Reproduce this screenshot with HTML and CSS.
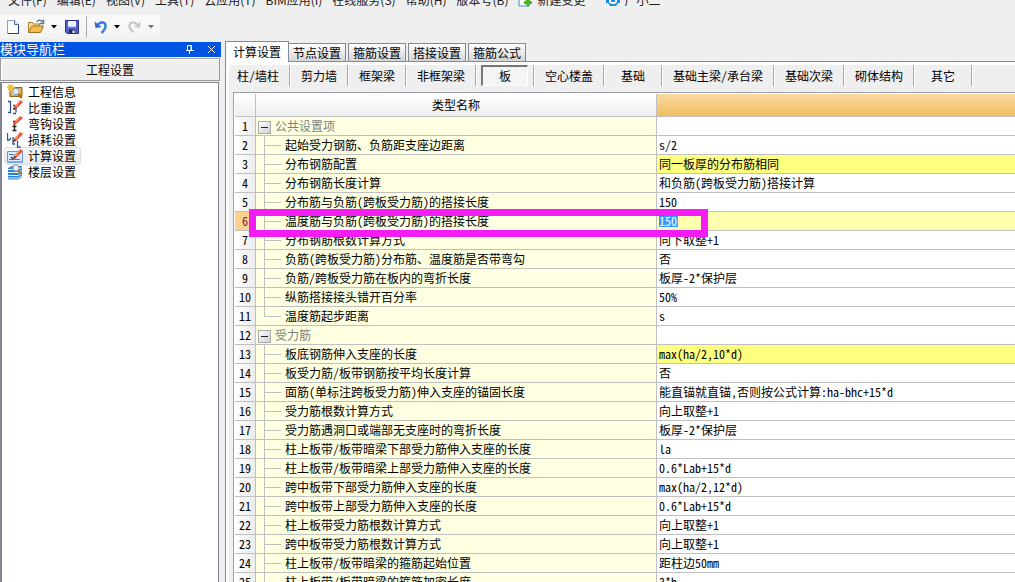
FILE: index.html
```html
<!DOCTYPE html>
<html lang="zh-CN">
<head>
<meta charset="utf-8">
<title>工程设置</title>
<link rel="stylesheet" href="styles.css">
</head>
<body>
<nav class="menubar">
  <a href="#">文件(F)</a><a href="#">编辑(E)</a><a href="#">视图(V)</a><a href="#">工具(T)</a><a href="#">云应用(T)</a><a href="#">BIM应用(I)</a><a href="#">在线服务(S)</a><a href="#">帮助(H)</a><a href="#">版本号(B)</a>
  <a href="#" class="with-icon"><svg width="14" height="16" viewBox="0 0 14 16"><path d="M1 1h10v13H1z" fill="#fff" stroke="#3c8ad0"/><path d="M8 5h4v4h2l-4 6-4-6h2z" fill="#43b51f"/><path d="M6 10h8v2H6z" fill="#43b51f"/></svg>新建变更</a>
  <a href="#" class="with-icon user"><svg width="14" height="16" viewBox="0 0 14 16"><path d="M1 3h12v3h1v5h-2l-2 3H4l-2-3H0V6h1z" fill="#1c8fe0"/><ellipse cx="7" cy="9" rx="4" ry="3" fill="#fff"/><path d="M5 8h4v2H5z" fill="#1c8fe0"/></svg>广小二</a>
</nav>
<div class="toolbar">
  <button class="tool new" aria-label="新建"><svg width="12" height="14" viewBox="0 0 12 14"><path d="M.5.5h7l4 4v9H.5z" fill="#fff" stroke="#8c9dba"/><path d="M7.500.5v4h4" fill="#dbe6f5" stroke="#556b90"/><path d="M11.500 5v8.500H1" fill="none" stroke="#25406e"/></svg></button>
  <button class="tool open" aria-label="打开"><svg width="17" height="15" viewBox="0 0 17 15"><path d="M.5 13.500v-10h4l1 1.500h6v3" fill="#f7d98a" stroke="#a8803a"/><path d="M.5 13.500 4 7h11.500l-3 6.500z" fill="#f6bd4e" stroke="#9b742f"/><path d="M9 3c1-2.500 4-2.500 5.500 0M15.500.5v4h-4" fill="none" stroke="#587595" stroke-width="1.400"/></svg></button>
  <button class="tool drop" aria-label="最近文件"><svg width="6" height="4" viewBox="0 0 6 4"><path d="M0 0h6L3 3.500z" fill="#000"/></svg></button>
  <button class="tool save" aria-label="保存"><svg width="14" height="14" viewBox="0 0 14 14"><path d="M.5.5h13v13H2l-1.500-1.500z" fill="#5361c9" stroke="#28318d"/><path d="M3 1h8v6H3z" fill="#edf1ff"/><path d="M3 7h8" stroke="#9aa5e8"/><path d="M4 9.500h6V13H4z" fill="#232b59"/><path d="M7.500 10.500h2V13h-2z" fill="#fff"/></svg></button>
  <span class="tool-line"></span>
  <button class="tool undo" aria-label="撤销"><svg width="14" height="14" viewBox="0 0 14 14"><path d="M4 4.500C7 1 12 2 11.500 6.500 11.300 9.500 9 11.500 7.500 13" fill="none" stroke="#3f7fdc" stroke-width="2.600"/><path d="M.5 1.500 1.500 8l6-1z" fill="#2e65c8"/></svg></button>
  <button class="tool drop" aria-label="撤销列表"><svg width="6" height="4" viewBox="0 0 6 4"><path d="M0 0h6L3 3.500z" fill="#000"/></svg></button>
  <button class="tool redo" aria-label="重做"><svg width="14" height="14" viewBox="0 0 14 14"><path d="M9 4.500C6 1 1 2 1.500 6.500 1.700 9 3.500 10.500 5.500 12" fill="none" stroke="#c6c8ca" stroke-width="2.200"/><path d="M12.500 1.500 12 8 6 7z" fill="#c6c8ca"/></svg></button>
  <button class="tool drop" aria-label="重做列表"><svg width="6" height="4" viewBox="0 0 6 4"><path d="M0 0h6L3 3.500z" fill="#777"/></svg></button>
</div>
<div class="workspace">
  <aside class="navigator">
    <header class="nav-title"><span>模块导航栏</span>
      <button class="pin" aria-label="固定"><svg width="8" height="9" viewBox="0 0 8 9"><path d="M1.500 5V.5h4V5M5 .5V5M0 5.500h8M3.500 6v3" fill="none" stroke="#fff"/></svg></button>
      <button class="close" aria-label="关闭"><svg width="9" height="9" viewBox="0 0 9 9"><path d="m1 1 7 7M8 1 1 8" stroke="#fff" fill="none"/></svg></button>
    </header>
    <button class="nav-group">工程设置</button>
    <div class="nav-list">
      <button class="nav-item"><svg width="16" height="16" viewBox="0 0 16 16"><path d="M3 3.500h12v9H3z" fill="#e2a83b" stroke="#8c6420"/><path d="M5 5h8v6H5z" fill="#f8e5ae"/><path d="M3.500 0v8M0 3.500h8M1 1l5 5M6 1 1 6" stroke="#f2c22e" stroke-width="1.300"/><circle cx="9" cy="7.500" r="3.200" fill="#e3f0fc" stroke="#8296b4"/><path d="m11.500 10 3 4" stroke="#b06b18" stroke-width="2.400"/></svg><span>工程信息</span></button>
      <button class="nav-item"><svg width="16" height="16" viewBox="0 0 16 16"><path d="M1 1.500h2.500v11H1M6 5.500h3v7M9 13.500H6" fill="none" stroke="#2f538e" stroke-width="1.300"/><path d="m6 10 1-3 6-7 3 2-7 7z" fill="#e8492a"/><path d="m8 6 5-6 1 .5-5 7z" fill="#ff9a78"/><path d="m6 10 1-3 2 2z" fill="#5a3a2a"/></svg><span>比重设置</span></button>
      <button class="nav-item"><svg width="16" height="16" viewBox="0 0 16 16"><path d="M6 5.500h3M7.500 6v9M5.500 10.500h4M5.500 14.500h4" fill="none" stroke="#222" stroke-width="1.300"/><path d="m6 9 1-3 6-6 3 2-7 6z" fill="#e8492a"/><path d="m8 5 5-5 1 .5-5 6z" fill="#ff9a78"/></svg><span>弯钩设置</span></button>
      <button class="nav-item"><svg width="16" height="16" viewBox="0 0 16 16"><path d="M.5 1v7h2l1.500-2M6 5v7h2M10.500 9v6h3" fill="none" stroke="#2f538e" stroke-width="1.300"/><path d="m6 10 1-3 6-7 3 2-7 7z" fill="#e8492a"/><path d="m8 6 5-6 1 .5-5 7z" fill="#ff9a78"/><path d="m6 10 1-3 2 2z" fill="#5a3a2a"/></svg><span>损耗设置</span></button>
      <button class="nav-item current"><svg width="16" height="16" viewBox="0 0 16 16"><path d="M.5 3.500h15v11H.5z" fill="#dcebfc" stroke="#6c95d8"/><path d="M1 13h14v1.500H1z" fill="#82aee8"/><path d="M2 6.500h5M2 11.500h11" stroke="#4376c8"/><path d="m4 9 2 2" stroke="#26406d" stroke-width="1.500"/><path d="m6 11 1-3 6-7 3 2-7 7z" fill="#e8492a"/><path d="m8 7 5-6 1 .5-5 7z" fill="#ff9a78"/><path d="m6 11 1-3 2 2z" fill="#5a3a2a"/></svg><span>计算设置</span></button>
      <button class="nav-item"><svg width="16" height="16" viewBox="0 0 16 16"><path d="m1 4 4-2h10v11l-4 2.500H1z" fill="#2f83c8"/><path d="M1 5.500h10l4-2M1 8.500h10l4-2M1 11.500h10l4-2M1 14h10l4-2" fill="none" stroke="#d7efff"/><circle cx="9" cy="4" r="3.200" fill="#e8f1fa" stroke="#8b97a8"/><path d="m11 6.500 4 3.500" stroke="#b57a24" stroke-width="2"/></svg><span>楼层设置</span></button>
    </div>
  </aside>
  <main class="content">
    <div class="tabs">
      <button class="tab active">计算设置</button><button class="tab">节点设置</button><button class="tab">箍筋设置</button><button class="tab">搭接设置</button><button class="tab">箍筋公式</button>
    </div>
    <div class="page">
      <div class="members">
        <button class="member">柱/墙柱</button><button class="member">剪力墙</button><button class="member">框架梁</button><button class="member">非框架梁</button><button class="member pressed"><span>板</span></button><button class="member">空心楼盖</button><button class="member">基础</button><button class="member">基础主梁/承台梁</button><button class="member">基础次梁</button><button class="member">砌体结构</button><button class="member">其它</button>
      </div>
      <div class="grid">
        <table>
          <colgroup><col class="col-num"><col class="col-name"><col></colgroup>
          <thead><tr><th></th><th>类型名称</th><th class="selected"></th></tr></thead>
          <tbody>
            <tr class="group"><th>1</th><td><button class="fold" aria-label="折叠"></button>公共设置项</td><td></td></tr>
            <tr><th>2</th><td>起始受力钢筋、负筋距支座边距离</td><td>s/2</td></tr>
            <tr class="changed"><th>3</th><td>分布钢筋配置</td><td>同一板厚的分布筋相同</td></tr>
            <tr><th>4</th><td>分布钢筋长度计算</td><td>和负筋(跨板受力筋)搭接计算</td></tr>
            <tr><th>5</th><td>分布筋与负筋(跨板受力筋)的搭接长度</td><td>150</td></tr>
            <tr class="editing"><th>6</th><td><label for="lap">温度筋与负筋(跨板受力筋)的搭接长度</label><span class="highlight"></span></td><td><input id="lap" type="text" value="150"></td></tr>
            <tr><th>7</th><td>分布钢筋根数计算方式</td><td>向下取整+1</td></tr>
            <tr><th>8</th><td>负筋(跨板受力筋)分布筋、温度筋是否带弯勾</td><td>否</td></tr>
            <tr><th>9</th><td>负筋/跨板受力筋在板内的弯折长度</td><td>板厚-2*保护层</td></tr>
            <tr><th>10</th><td>纵筋搭接接头错开百分率</td><td>50%</td></tr>
            <tr class="last"><th>11</th><td>温度筋起步距离</td><td>s</td></tr>
            <tr class="group"><th>12</th><td><button class="fold" aria-label="折叠"></button>受力筋</td><td></td></tr>
            <tr class="changed"><th>13</th><td>板底钢筋伸入支座的长度</td><td>max(ha/2,10*d)</td></tr>
            <tr><th>14</th><td>板受力筋/板带钢筋按平均长度计算</td><td>否</td></tr>
            <tr><th>15</th><td>面筋(单标注跨板受力筋)伸入支座的锚固长度</td><td>能直锚就直锚,否则按公式计算:ha-bhc+15*d</td></tr>
            <tr><th>16</th><td>受力筋根数计算方式</td><td>向上取整+1</td></tr>
            <tr><th>17</th><td>受力筋遇洞口或端部无支座时的弯折长度</td><td>板厚-2*保护层</td></tr>
            <tr><th>18</th><td>柱上板带/板带暗梁下部受力筋伸入支座的长度</td><td>la</td></tr>
            <tr><th>19</th><td>柱上板带/板带暗梁上部受力筋伸入支座的长度</td><td>0.6*Lab+15*d</td></tr>
            <tr><th>20</th><td>跨中板带下部受力筋伸入支座的长度</td><td>max(ha/2,12*d)</td></tr>
            <tr><th>21</th><td>跨中板带上部受力筋伸入支座的长度</td><td>0.6*Lab+15*d</td></tr>
            <tr><th>22</th><td>柱上板带受力筋根数计算方式</td><td>向上取整+1</td></tr>
            <tr><th>23</th><td>跨中板带受力筋根数计算方式</td><td>向上取整+1</td></tr>
            <tr><th>24</th><td>柱上板带/板带暗梁的箍筋起始位置</td><td>距柱边50mm</td></tr>
            <tr><th>25</th><td>柱上板带/板带暗梁的箍筋加密长度</td><td>3*h</td></tr>
          </tbody>
        </table>
      </div>
    </div>
  </main>
</div>
</body>
</html>
```
FILE: styles.css
```css
* { box-sizing: border-box; }

body {
  margin: 0;
  height: 100vh;
  overflow: hidden;
  display: flex;
  flex-direction: column;
  background: #efefef;
  color: #000;
  font: 12px/18px "Noto Sans CJK SC", sans-serif;
  font-feature-settings: "hwid";
}

button {
  margin: 0;
  padding: 0;
  border: 0;
  background: none;
  color: inherit;
  font: inherit;
  font-feature-settings: inherit;
}

svg { display: block; flex: none; }

/* Menu and toolbar */
.menubar {
  flex: none;
  display: flex;
  align-items: flex-end;
  gap: 10px;
  height: 9px;
  padding-left: 8px;
  margin-bottom: 6px;
  overflow: hidden;
  font-feature-settings: normal;
  white-space: nowrap;
}
.menubar a { color: #222; text-decoration: none; }
.with-icon { display: flex; gap: 5px; align-items: center; }
.user { margin-left: 10px; }

.toolbar {
  flex: none;
  display: flex;
  align-items: center;
  align-self: flex-start;
  width: 160px;
  height: 23px;
  padding-left: 7px;
  margin-bottom: 3px;
  border-radius: 3px;
  background: linear-gradient(#fafafa, #f3f3f3);
}
.open { margin-left: 9px; }
.drop { margin-left: 6px; }
.save { margin-left: 8px; }
.tool-line { width: 1px; height: 21px; margin: 0 7px; background: #aaa; }
.redo { margin-left: 8px; }

.workspace { flex: 1; display: flex; min-height: 0; }

/* Module navigator */
.navigator {
  flex: none;
  display: flex;
  flex-direction: column;
  width: 221px;
  padding-top: 1px;
  margin-right: 4px;
}
.nav-title {
  flex: none;
  display: flex;
  align-items: center;
  height: 15px;
  padding-right: 5px;
  background: #0054e3;
  color: #fff;
  font-size: 13px;
  line-height: 15px;
}
.nav-title span { line-height: 13px; margin-bottom: 2px; }
.pin { margin-left: auto; margin-right: 13px; }
.nav-group {
  flex: none;
  height: 23px;
  margin: 1px 1px 1px 0;
  border: 1px solid #999;
  border-top-color: #aaa;
  box-shadow: inset 1px 1px #fff;
}
.nav-list {
  flex: 1;
  margin-right: 2px;
  padding: 1px 0 0 3px;
  border: 1px solid #808490;
  border-width: 1px 1px 0 2px;
  background: #fff;
}
.nav-item {
  display: flex;
  align-items: center;
  gap: 5px;
  height: 16px;
  padding: 0 4px 0 2px;
  line-height: 16px;
}
.current {
  border-radius: 3px;
  background: linear-gradient(#f8f8f8, #e9e9e9);
  box-shadow: 0 0 0 1px #ddd;
}

/* Tabs */
.content { flex: 1; display: flex; flex-direction: column; min-width: 0; }
.tabs { flex: none; display: flex; align-items: flex-end; gap: 2px; height: 20px; }
.tab {
  width: 58px;
  height: 18px;
  border: 1px solid #858994;
  border-bottom: 0;
  background: linear-gradient(#fff, #d4d4d6);
  line-height: 18px;
}
.tab.active {
  z-index: 1;
  width: 64px;
  height: 21px;
  margin-right: -3px;
  margin-bottom: -1px;
  background: #fff;
}
.page {
  flex: 1;
  display: flex;
  flex-direction: column;
  min-height: 0;
  border-top: 1px solid #858994;
  border-left: 1px solid #858994;
  box-shadow: inset 3px 3px #fff;
}

/* Member types */
.members { flex: none; display: flex; height: 21px; margin: 3px 0 6px; }
.member {
  min-width: 58px;
  padding: 0 10px 0 11px;
  border-right: 1px solid #aaa;
  box-shadow: 1px 0 #fff;
  white-space: nowrap;
}
.pressed { padding: 0 5px; }
.pressed span {
  display: block;
  height: 21px;
  border: 1px solid #fff;
  border-top: 2px solid #777;
  border-left: 2px solid #777;
  background: repeating-conic-gradient(#fff 0 25%, #ececec 0 50%) 0 0 / 2px 2px;
}

/* Settings grid */
.grid {
  flex: 1;
  min-height: 0;
  margin-left: 7px;
  padding: 1px 0 0 1px;
  overflow: hidden;
  border: 1px solid #a0a0a8;
  border-width: 1px 0 0 1px;
  background: #fff;
}
table { width: 100%; table-layout: fixed; border-collapse: separate; border-spacing: 0; }
.col-num { width: 21px; }
.col-name { width: 401px; }
th, td {
  height: 19px;
  padding: 0;
  border: 0 solid #c0c0c0;
  border-width: 0 1px 1px 0;
  font-weight: normal;
  line-height: 18px;
  white-space: nowrap;
}
th:last-child, td:last-child { border-right-width: 0; }
thead th { height: 23px; background: linear-gradient(#fff, #eee); }
thead .selected { background: linear-gradient(#fad9a2, #f0be5c); }
tbody th { background: linear-gradient(90deg, #fff, #ececec); text-align: center; }
td:last-child { padding-left: 2px; }
td:nth-child(2) {
  position: relative;
  padding-left: 29px;
  background:
    linear-gradient(#c0c0c0, #c0c0c0) 8px 0 / 1px 100% no-repeat,
    linear-gradient(#c0c0c0, #c0c0c0) 9px 9px / 16px 1px no-repeat,
    #ffffe1;
}
.last td:nth-child(2) { background-size: 1px 10px, 16px 1px, auto; }
.group td:nth-child(2) {
  padding-left: 2px;
  color: #808080;
  background: #ffffe1;
}
.fold {
  width: 13px;
  height: 13px;
  margin-right: 4px;
  vertical-align: middle;
  border: 1px solid #aaa;
  background:
    linear-gradient(#222, #222) center / 7px 1px no-repeat,
    linear-gradient(135deg, #fff, #d0d0d0);
}
.changed td:last-child { background: #ffff80; }
.editing th { background: #ffd08c; color: #5a1a5a; }
.editing td:last-child { background: #ffffb0; }
.editing input {
  display: block;
  width: 19px;
  height: 13px;
  margin: 0 0 2px;
  padding: 0;
  border: 0;
  border-right: 1px solid #e08030;
  background: #3399ff;
  color: #fff;
  font: 12px/13px "Noto Sans CJK SC", sans-serif;
  font-feature-settings: "hwid";
}
.highlight {
  position: absolute;
  z-index: 2;
  top: -3px;
  left: -7px;
  width: 459px;
  height: 28px;
  border: 7px solid #f41cf4;
  pointer-events: none;
}
```
